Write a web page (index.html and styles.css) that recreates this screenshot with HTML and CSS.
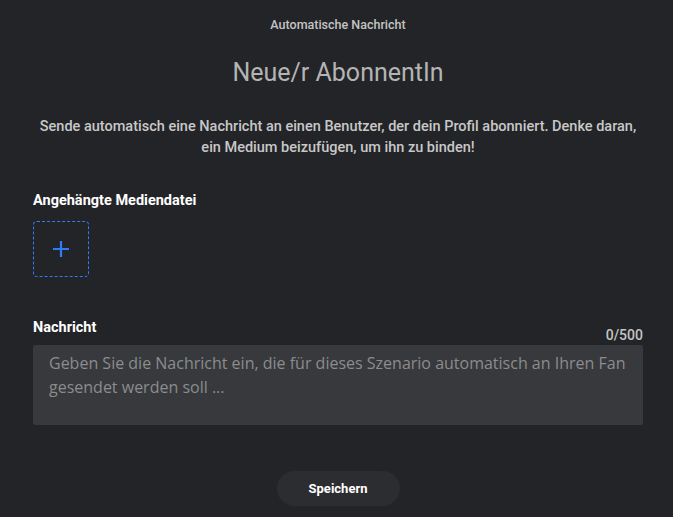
FILE: index.html
```html
<!DOCTYPE html>
<html lang="de">
<head>
    <meta charset="UTF-8">
    <meta name="viewport" content="width=device-width, initial-scale=1.0">
    <title>Automatische Nachricht</title>
    <link rel="stylesheet" href="styles.css">
</head>
<body>
    <div class="panel">
        <div class="kicker">Automatische Nachricht</div>
        <h1 class="title">Neue/r AbonnentIn</h1>
        <p class="intro">Sende automatisch eine Nachricht an einen Benutzer, der dein Profil abonniert. Denke daran, ein Medium beizufügen, um ihn zu binden!</p>

        <div class="label">Angehängte Mediendatei</div>
        <button class="media-add" type="button">
            <svg width="18" height="18" viewBox="0 0 18 18">
                <path d="M9 1v16M1 9h16" stroke="#2f7cf6" stroke-width="2.2" fill="none"/>
            </svg>
        </button>

        <div class="message-head">
            <div class="label">Nachricht</div>
            <div class="counter">0/500</div>
        </div>
        <textarea class="message" placeholder="Geben Sie die Nachricht ein, die für dieses Szenario automatisch an Ihren Fan gesendet werden soll ..."></textarea>

        <div class="actions">
            <button class="save" type="button">Speichern</button>
        </div>
    </div>
</body>
</html>
```

FILE: styles.css
```css
body {
    margin: 0;
    background-color: #232427;
    font-family: Roboto, "Liberation Sans", sans-serif;
    color: #ffffff;
}
.panel {
    padding: 16px 30px 0 33px;
}
.kicker {
    text-align: center;
    font-size: 12.5px;
    font-weight: 500;
    color: #c4c4c4;
    line-height: 18px;
}
.title {
    text-align: center;
    font-size: 25px;
    font-weight: 400;
    color: #b4b4b4;
    margin: 25px 0 0;
    line-height: 28px;
}
.intro {
    text-align: center;
    font-size: 14.5px;
    font-weight: 500;
    color: #c8c8c8;
    line-height: 21px;
    margin: 29px 0 0;
}
.label {
    font-size: 14.5px;
    font-weight: 700;
    color: #ffffff;
    margin-top: 35px;
    line-height: 16px;
}
.media-add {
    display: flex;
    justify-content: center;
    align-items: center;
    width: 56px;
    height: 56px;
    margin-top: 12px;
    padding: 0;
    background: transparent;
    border: 1px dashed #2f7cf6;
    border-radius: 4px;
    cursor: pointer;
}
.message-head {
    display: flex;
    justify-content: space-between;
    align-items: flex-start;
    margin-top: 43px;
}
.message-head .label {
    margin-top: 0;
}
.counter {
    font-size: 14px;
    font-weight: 500;
    color: #c4c4c4;
    line-height: 16px;
    margin-top: 7px;
}
.message {
    display: block;
    box-sizing: border-box;
    width: 100%;
    height: 80px;
    margin-top: 2px;
    padding: 6px 16px;
    background-color: #38393c;
    border: none;
    border-radius: 2px;
    resize: none;
    outline: none;
    font-family: "Open Sans", Roboto, sans-serif;
    font-size: 16px;
    line-height: 24px;
    color: #ffffff;
}
.message::placeholder {
    color: #8b8c8e;
}
.actions {
    display: flex;
    justify-content: center;
    margin-top: 46px;
}
.save {
    width: 123px;
    height: 35px;
    border: none;
    border-radius: 18px;
    background-color: #2c2d30;
    color: #ffffff;
    font-family: Roboto, sans-serif;
    font-size: 13px;
    font-weight: 700;
    cursor: pointer;
}
```
